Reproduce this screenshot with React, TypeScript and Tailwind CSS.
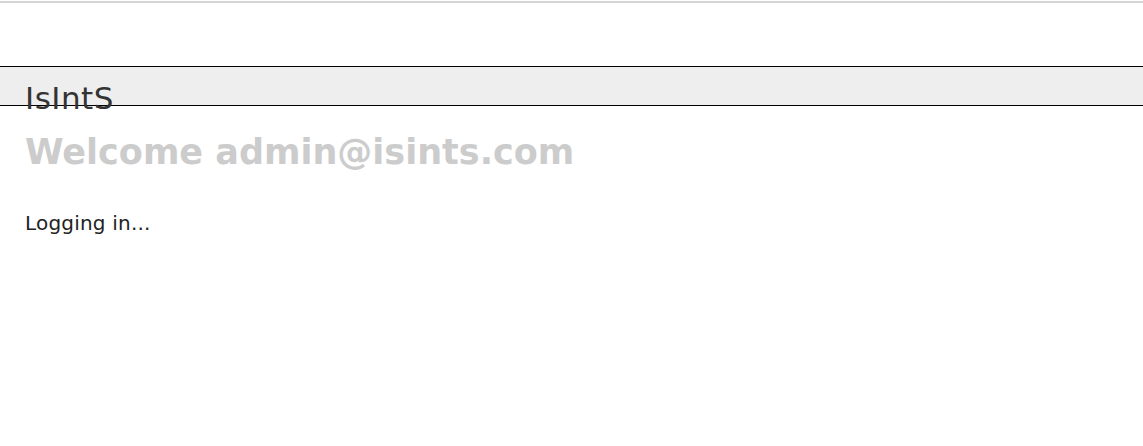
export default function App() {
  return (
    <div className="min-h-[446px] bg-white font-['DejaVu_Sans',sans-serif]">
      <div className="h-[2px] bg-[#d4d4d4] mt-[1px]" />
      <div className="h-[63px]" />
      <header className="h-[40px] bg-[#eeeeee] border-y border-black">
        <div className="pl-[25px] pt-[11px] text-[31px] leading-[40px] tracking-[0.5px] text-[#333333]">IsIntS</div>
      </header>
      <main className="px-[25px]">
        <h1 className="mt-[24px] text-[35px] leading-[44px] font-bold text-[#cccccc]">Welcome admin@isints.com</h1>
        <p className="mt-[37px] text-[20px] leading-[24px] tracking-[0.2px] text-[#222222]">Logging in...</p>
      </main>
    </div>
  )
}
